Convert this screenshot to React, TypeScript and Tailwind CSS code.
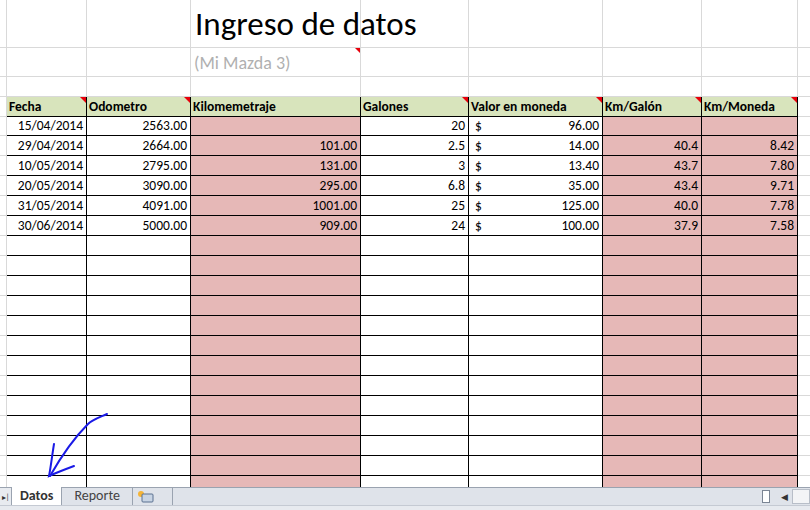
const cols = [7, 80, 104, 170, 108, 134, 99, 96, 30];
const data: string[][] = [
  ["15/04/2014", "2563.00", "", "20", "96.00", "", ""],
  ["29/04/2014", "2664.00", "101.00", "2.5", "14.00", "40.4", "8.42"],
  ["10/05/2014", "2795.00", "131.00", "3", "13.40", "43.7", "7.80"],
  ["20/05/2014", "3090.00", "295.00", "6.8", "35.00", "43.4", "9.71"],
  ["31/05/2014", "4091.00", "1001.00", "25", "125.00", "40.0", "7.78"],
  ["30/06/2014", "5000.00", "909.00", "24", "100.00", "37.9", "7.58"],
];
const heads = ["Fecha", "Odometro", "Kilomemetraje", "Galones", "Valor en moneda", "Km/Galón", "Km/Moneda"];
const tri = [true, true, false, true, true, true, true];
const pink = [false, false, true, false, false, true, true];
const font = { fontFamily: "Calibri, 'Open Sans', 'Liberation Sans', sans-serif" };

function Gray({ w, h, children }: { w: number; h: number; children?: React.ReactNode }) {
  return <div className="shrink-0 border-r border-b border-[#d9d9d9] relative" style={{ width: w, height: h }}>{children}</div>;
}

export default function App() {
  const rows: React.ReactNode[] = [];
  for (let r = 0; r < 20; r++) {
    const d = data[r] || ["", "", "", "", "", "", ""];
    rows.push(
      <div key={r} className="flex h-[20px] shrink-0">
        <Gray w={7} h={20} />
        {d.map((v, i) => (
          <div key={i} className={`shrink-0 h-[20px] border-r border-b border-black text-[13.5px] leading-[19px] px-[2px] flex ${pink[i] ? "bg-[#e6b8b7]" : "bg-white"} ${i === 4 ? "justify-between" : "justify-end"}`} style={{ width: cols[i + 1] }}>
            {i === 4 && data[r] ? <><span className="pl-[4px]">$</span><span className="pr-[1px]">{v}</span></> : <span className="pr-[1px]">{v}</span>}
          </div>
        ))}
        <Gray w={30} h={20} />
      </div>
    );
  }
  return (
    <div className="w-[810px] h-[510px] bg-white flex flex-col overflow-hidden relative" style={font}>
      <div className="flex h-[48px] shrink-0">
        {cols.map((w, i) => <Gray key={i} w={w} h={48}>{i === 3 ? <div className="absolute left-[4px] top-[3px] text-[33px] leading-[42px] whitespace-nowrap z-10">Ingreso de datos</div> : null}</Gray>)}
      </div>
      <div className="flex h-[29px] shrink-0">
        {cols.map((w, i) => <Gray key={i} w={w} h={29}>{i === 3 ? <><div className="absolute left-[3px] top-[2px] text-[18px] text-[#b0b0b0] whitespace-nowrap">(Mi Mazda 3)</div><div className="absolute right-0 top-0 w-0 h-0 border-l-[5px] border-l-transparent border-t-[5px] border-t-red-600" /></> : null}</Gray>)}
      </div>
      <div className="flex h-[20px] shrink-0">
        {cols.map((w, i) => <Gray key={i} w={w} h={20} />)}
      </div>
      <div className="flex h-[20px] shrink-0 -mt-[1px] border-t border-black">
        <Gray w={7} h={20} />
        {heads.map((h, i) => (
          <div key={i} className="relative shrink-0 h-[20px] border-r border-b border-black bg-[#d8e4bc] font-bold text-[13.5px] leading-[19px] pl-[2px]" style={{ width: cols[i + 1] }}>
            {h}
            {tri[i] && <div className="absolute right-0 top-0 w-0 h-0 border-l-[6px] border-l-transparent border-t-[6px] border-t-red-600" />}
          </div>
        ))}
        <Gray w={30} h={20} />
      </div>
      <div className="flex-1 overflow-hidden flex flex-col">{rows}</div>
      <div className="h-[18px] shrink-0 bg-[#dfe3ea] border-t border-[#9aa3b0] flex items-end text-[14px] relative">
        <div className="w-[12px] h-full border-r border-[#9aa3b0] bg-[#e8ebf0] text-[8px] flex items-center justify-center text-[#333]">▸|</div>
        <div className="h-[18px] -mt-[1px] bg-white px-[8px] font-bold text-[#333] leading-[17px] border-r border-[#9aa3b0]">Datos</div>
        <div className="h-[17px] px-[12px] text-[#444] leading-[16px] border-r border-[#9aa3b0]">Reporte</div>
        <div className="h-[17px] w-[40px] border-r border-[#9aa3b0] flex items-center pl-[4px]">
          <svg width="18" height="14" viewBox="0 0 18 14"><circle cx="4" cy="4" r="3" fill="#f5b437" /><rect x="5" y="4" width="11" height="8" rx="1" fill="#c8d4e4" stroke="#5a7090" /></svg>
        </div>
        <div className="absolute right-[40px] top-[2px] w-[8px] h-[13px] border border-[#7b8594] bg-white" />
        <div className="absolute right-[22px] top-[2px] text-[9px] text-[#333]">◀</div>
        <div className="absolute right-0 top-[1px] w-[18px] h-[15px] bg-[#f3f4f6] border border-[#b8bec8]" />
      </div>
      <div className="h-[5px] shrink-0 bg-[#e7eaef] border-t border-[#c5cad3]" />
      <svg className="absolute left-0 top-0 pointer-events-none" width="810" height="510">
        <path d="M107 414 C98 418 92 420 88 424 C78 434 66 448 50 476" fill="none" stroke="#1a1ae6" strokeWidth="2" strokeLinecap="round" />
        <path d="M54 444 C52 456 51 466 49 476 C58 472 66 469 74 466" fill="none" stroke="#1a1ae6" strokeWidth="2" strokeLinecap="round" />
      </svg>
    </div>
  );
}
